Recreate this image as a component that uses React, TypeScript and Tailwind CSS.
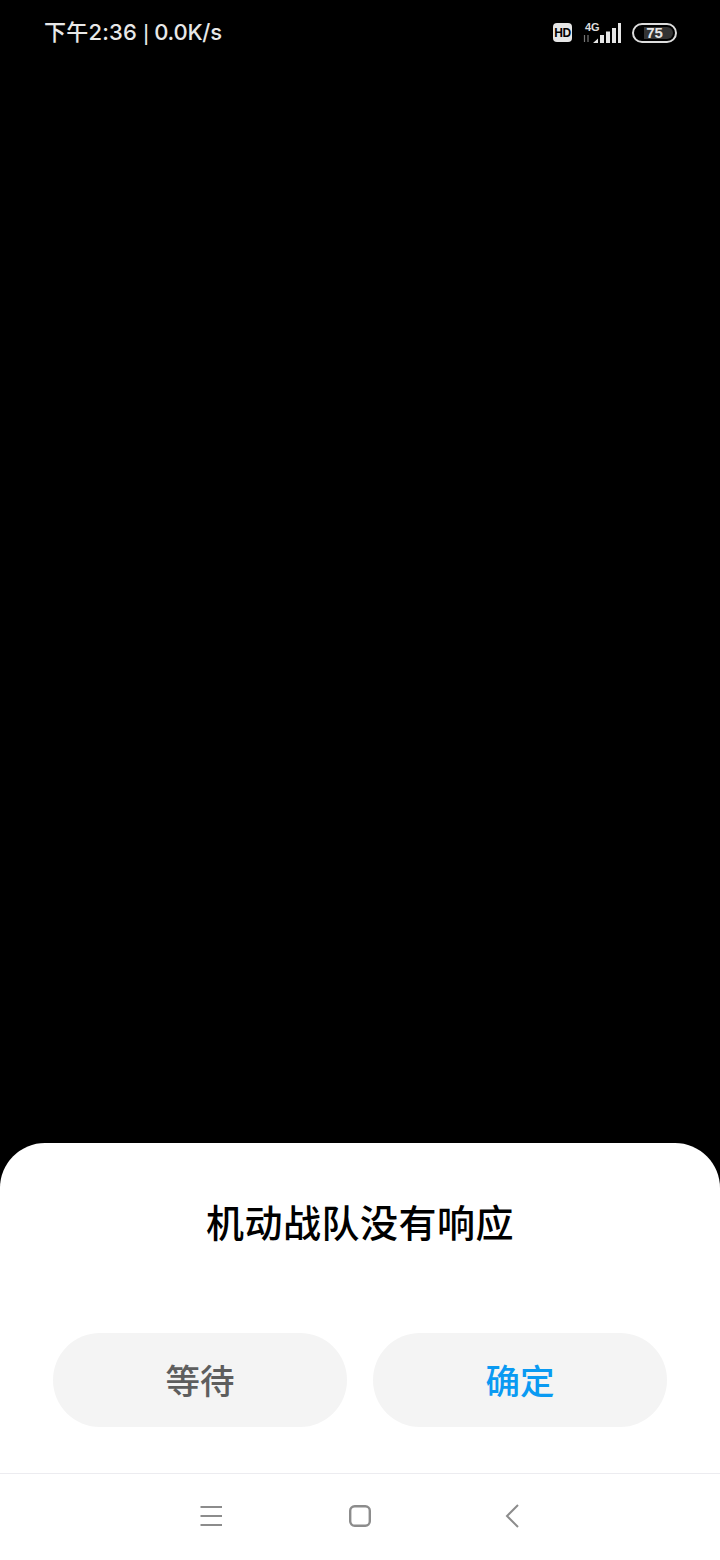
const cjk = { fontFamily: '"Noto Sans CJK SC", sans-serif' };

function StatusIcons() {
  return (
    <div className="flex items-center">
      {/* HD */}
      <div className="flex h-[19px] w-[19px] items-center justify-center rounded-[4px] bg-[#e6e6e6]">
        <span className="text-[12px] font-bold leading-none tracking-[-0.4px] text-black" style={{ fontFamily: '"Liberation Sans", sans-serif' }}>HD</span>
      </div>
      {/* 4G + signal */}
      <svg className="ml-[10px]" width="40" height="22" viewBox="0 0 40 22">
        <text x="3" y="8.5" fontSize="11" fontWeight="700" fill="#ddd" fontFamily="Liberation Sans, sans-serif">4G</text>
        <path d="M2.5 13v7M6 13v7" stroke="#777" strokeWidth="1.2" />
        <path d="M11 21h5v-4.5zM18 21h4v-8h-4zM24 21h4V9.5h-4zM30 21h4V6h-4zM36 21h3V1h-3z" fill="#e6e6e6" />
      </svg>
      {/* Battery */}
      <div className="relative ml-[10px] flex h-[20px] w-[45px] items-center justify-center rounded-full border-2 border-[#dddddd]">
        <div className="absolute bottom-[2px] left-[10px] right-[2px] top-[2px] rounded-r-full bg-[#333333]" />
        <span className="relative text-[15px] font-bold leading-none text-[#e6e6e6]" style={{ fontFamily: '"Liberation Sans", sans-serif' }}>75</span>
      </div>
    </div>
  );
}

export default function App() {
  return (
    <div className="flex h-[1560px] w-[720px] flex-col bg-black" style={cjk}>
      {/* Status bar */}
      <div className="flex h-[65px] items-center justify-between pl-[44px] pr-[43px]">
        <span className="text-[22px] font-medium leading-none tracking-[0.2px] text-[#e8e8e8]" style={{ fontFamily: 'Inter, "Noto Sans CJK SC", sans-serif' }}>
          下午2:36 <span style={{ fontFamily: '"Liberation Sans", sans-serif' }}>|</span>{' '}
          <span className="ml-[-1px] tracking-[-0.2px]">0.0K/s</span>
        </span>
        <StatusIcons />
      </div>

      <div className="flex-1" />

      {/* Dialog sheet */}
      <div className="flex h-[330px] flex-col items-center rounded-t-[45px] bg-white">
        <h1 className="mt-[53px] text-[38px] font-medium leading-[50px] tracking-[0.5px] text-black">机动战队没有响应</h1>
        <div className="mt-[87px] flex gap-[26px]">
          <button className="h-[94px] w-[294px] rounded-full bg-[#f4f4f4] text-[34.5px] font-medium text-[#5e5e5e]">等待</button>
          <button className="h-[94px] w-[294px] rounded-full bg-[#f4f4f4] text-[34.5px] font-medium text-[#0a9af2]">确定</button>
        </div>
      </div>

      {/* Navigation bar */}
      <div className="flex h-[87px] items-center justify-center border-t border-[#ececf0] bg-white pb-[2px] pr-[2px]">
        <svg width="22" height="20" viewBox="0 0 22 20" fill="none" stroke="#8c8c8c" strokeWidth="2">
          <path d="M0.5 1h21.5M0.5 10h21.5M0.5 19h21.5" />
        </svg>
        <svg className="ml-[127px]" width="22" height="22" viewBox="0 0 22 22" fill="none" stroke="#8c8c8c" strokeWidth="2.4">
          <rect x="1.2" y="1.2" width="19.6" height="19.6" rx="4.5" />
        </svg>
        <svg className="ml-[134px]" width="14" height="24" viewBox="0 0 14 24" fill="none" stroke="#8c8c8c" strokeWidth="2">
          <path d="M13 1 2 12 13 23" />
        </svg>
      </div>
    </div>
  );
}
